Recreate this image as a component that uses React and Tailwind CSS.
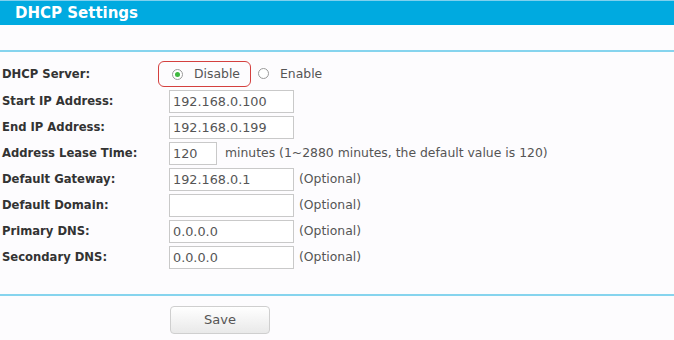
import { useState } from "react";

const rows = [
    { label: "Start IP Address:", value: "192.168.0.100" },
    { label: "End IP Address:", value: "192.168.0.199" },
    { label: "Address Lease Time:", value: "120", short: true, note: "minutes (1~2880 minutes, the default value is 120)" },
    { label: "Default Gateway:", value: "192.168.0.1", note: "(Optional)" },
    { label: "Default Domain:", value: "", note: "(Optional)" },
    { label: "Primary DNS:", value: "0.0.0.0", note: "(Optional)" },
    { label: "Secondary DNS:", value: "0.0.0.0", note: "(Optional)" },
];

export default function App() {
    const [server, setServer] = useState("disable");

    return (
        <div className="w-[674px] h-[340px] overflow-hidden bg-[#fdfcfe] font-['DejaVu_Sans',sans-serif] text-[12.4px]">
            {/* Header */}
            <div className="h-[25px] border-t border-[#7fd0ee] bg-[#00aae0] flex items-center pl-[15px]">
                <h1 className="text-white font-bold text-[15px] leading-none">DHCP Settings</h1>
            </div>
            <div className="h-[25px]" />
            <div className="h-[2px] bg-[#86d4ee]" />

            {/* Form */}
            <div className="pt-[8px]">
                <div className="h-[28px] flex items-center">
                    <span className="w-[167px] pl-[2px] pt-[2px] font-bold text-[11.6px] text-[#333]">DHCP Server:</span>
                    <label className="ml-[-9px] h-[26px] w-[93px] rounded-[6px] border-[1.5px] border-[#d4403f] flex items-center pl-[13px] gap-[11px] text-[#555] cursor-pointer">
                        <Radio checked={server === "disable"} onChange={() => setServer("disable")} />
                        Disable
                    </label>
                    <label className="ml-[7px] flex items-center gap-[11px] text-[#555] cursor-pointer">
                        <Radio checked={server === "enable"} onChange={() => setServer("enable")} />
                        Enable
                    </label>
                </div>

                {rows.map((row) => (
                    <div key={row.label} className="h-[26px] flex items-center">
                        <span className="w-[169px] pl-[2px] pt-[2px] font-bold text-[11.6px] text-[#333] whitespace-nowrap">{row.label}</span>
                        <input
                            type="text"
                            defaultValue={row.value}
                            className={`${row.short ? "w-[48px]" : "w-[125px]"} h-[23px] border border-[#c9c9c9] bg-white px-[3px] text-[12.8px] text-[#555] outline-none`}
                        />
                        {row.note && <span className={`${row.short ? "ml-[8px]" : "ml-[5px]"} text-[#555] whitespace-nowrap`}>{row.note}</span>}
                    </div>
                ))}
            </div>

            <div className="mt-[24px] h-[2px] bg-[#86d4ee]" />

            <div className="pt-[10px] pl-[170px]">
                <button className="w-[100px] h-[28px] rounded-[4px] border border-[#cfcfcf] bg-gradient-to-b from-white to-[#e9e9e9] text-[13px] text-[#555]">
                    Save
                </button>
            </div>
        </div>
    );
}

function Radio({ checked, onChange }) {
    return (
        <span
            onClick={onChange}
            className="w-[11px] h-[11px] rounded-full border border-[#9a9a9a] bg-white flex items-center justify-center"
        >
            {checked && <span className="w-[5px] h-[5px] rounded-full bg-[#3fb83f]" />}
        </span>
    );
}
